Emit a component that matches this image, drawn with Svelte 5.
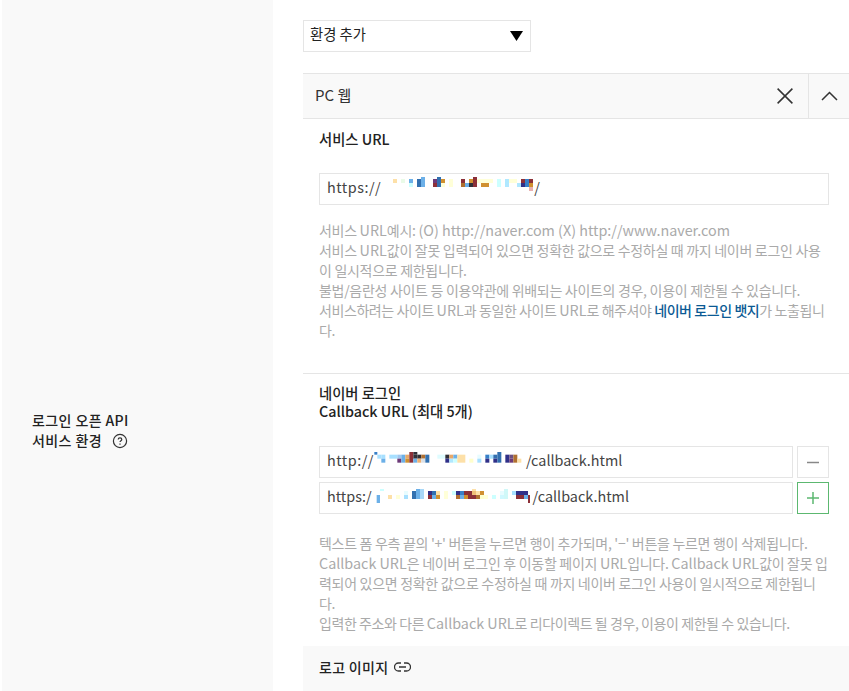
<script lang="ts">
  type Cell = [number, number, number, number, string];

  const R = '#8c3038', D = '#303038', N = '#303088', B = '#3270b0', M = '#3880c8', L = '#6cb0e8', S = '#a8e0ff';
  const C = '#ccffff', Y = '#ffffd8', T = '#fde0a8', O = '#d09030', W = '#b07030', P = '#6c3a78';

  const serviceMosaic: Cell[] = [
    [21, 15, 12, 12, T], [45, 15, 12, 12, '#eafbe8'], [69, 15, 12, 12, L], [69, 27, 12, 12, C],
    [93, 15, 12, 24, B], [105, 9, 12, 30, L], [141, 15, 12, 12, P], [141, 27, 12, 12, R],
    [153, 9, 12, 30, B], [165, 15, 12, 12, O], [165, 27, 12, 12, Y], [189, 15, 12, 24, Y],
    [225, 15, 12, 12, R], [225, 27, 12, 12, W], [237, 27, 12, 12, L], [249, 15, 12, 12, O],
    [249, 27, 12, 12, D], [261, 9, 12, 30, R], [273, 15, 48, 12, Y], [285, 27, 24, 12, O],
    [333, 15, 12, 24, C], [357, 15, 12, 24, '#b0e8ff'], [369, 15, 24, 12, Y], [393, 27, 12, 12, '#b0e8ff'],
    [405, 15, 12, 12, R], [405, 27, 12, 12, N], [417, 15, 12, 24, M], [429, 15, 12, 12, R],
    [429, 27, 12, 12, O], [429, 39, 12, 12, '#e8b0b0']
  ];

  const httpMosaic: Cell[] = [
    [9, 9, 9, 8, M], [18, 17, 12, 12, S], [30, 17, 12, 12, S], [30, 29, 12, 12, L], [54, 17, 24, 12, S],
    [78, 17, 12, 12, '#a0c8f0'], [78, 29, 12, 12, P], [90, 17, 12, 24, L], [102, 17, 12, 12, '#e8a868'],
    [102, 29, 12, 12, O], [114, 9, 12, 32, R], [126, 9, 12, 8, D], [126, 17, 12, 12, D], [126, 29, 12, 12, L],
    [138, 17, 12, 12, D], [138, 29, 12, 12, '#f0b070'], [150, 17, 12, 12, W], [150, 29, 12, 12, '#d8e0e8'],
    [162, 17, 12, 24, B], [198, 17, 24, 12, '#dffcff'], [222, 17, 12, 12, D], [222, 29, 12, 12, N],
    [234, 17, 12, 12, '#e8a868'], [234, 29, 12, 12, '#b0e8ff'], [246, 17, 12, 12, L], [246, 29, 12, 12, C],
    [258, 17, 24, 24, T], [294, 29, 12, 12, '#ffffcc'], [318, 17, 12, 12, '#e8fcff'], [318, 29, 12, 12, S],
    [342, 17, 12, 12, M], [342, 29, 12, 12, N], [354, 17, 12, 12, S], [366, 17, 12, 12, B], [366, 29, 12, 12, N],
    [378, 9, 12, 32, B], [402, 17, 12, 24, N], [414, 17, 12, 12, '#6c5080'], [414, 29, 12, 12, P],
    [426, 17, 12, 24, W], [438, 29, 12, 12, T]
  ];

  const httpsMosaic: Cell[] = [
    [20, 30, 10, 24, L], [30, 12, 12, 6, C], [54, 30, 12, 12, T], [78, 30, 12, 12, Y], [102, 18, 12, 12, '#e8fcff'],
    [102, 30, 12, 12, S], [126, 18, 12, 24, B], [138, 12, 12, 30, L], [150, 12, 12, 30, '#a8d8f8'],
    [174, 18, 12, 12, N], [174, 30, 12, 12, R], [186, 18, 12, 12, B], [186, 30, 12, 12, L], [198, 18, 12, 12, T],
    [198, 30, 12, 12, O], [222, 18, 12, 24, Y], [246, 18, 12, 12, C], [258, 18, 12, 12, N], [258, 30, 12, 12, W],
    [270, 18, 12, 12, M], [270, 30, 12, 12, L], [282, 18, 24, 12, R], [282, 30, 12, 12, O], [294, 30, 12, 12, R],
    [306, 12, 12, 6, T], [306, 18, 12, 12, '#f0c078'], [306, 30, 12, 12, R], [318, 18, 12, 12, T], [318, 30, 12, 12, W],
    [330, 18, 12, 12, O], [330, 30, 12, 12, '#ffffcc'], [342, 30, 12, 12, Y], [366, 30, 12, 12, C],
    [390, 18, 12, 12, '#e8fcff'], [390, 30, 12, 12, '#d0f8ff'], [402, 12, 12, 30, '#d0f8f8'], [426, 18, 12, 12, S],
    [438, 18, 24, 12, N], [438, 30, 24, 12, R], [462, 18, 12, 12, N], [462, 30, 12, 12, L], [474, 30, 6, 24, R]
  ];
</script>

<div class="page">
  <div class="row">
    <div class="label">
      <div>
        로그인 오픈 API<br />
        서비스 환경
        <svg class="help" width="16" height="16" viewBox="0 0 16 16" fill="none" stroke="#333">
          <circle cx="8" cy="8" r="6.6" stroke-width="1.2" />
          <path d="M6.2 6.5c0-1 .8-1.7 1.8-1.7s1.8.7 1.8 1.6c0 1.300-1.800 1.300-1.800 2.700" stroke-width="1.200" />
          <path d="M8 10.400v1.300" stroke-width="1.200" />
        </svg>
      </div>
    </div>

    <div class="content">
      <div class="select">
        <span>환경 추가</span>
        <svg width="13" height="10" viewBox="0 0 13 10"><path d="M0 0h13L6.500 10z" fill="#000" /></svg>
      </div>

      <div class="panel">
        <div class="panel-head">
          <span class="panel-title">PC 웹</span>
          <button class="head-btn close" aria-label="삭제">
            <svg width="16" height="16" viewBox="0 0 16 16" fill="none" stroke="#333" stroke-width="1.500"><path d="M.6.6l14.800 14.800M15.400.6L.6 15.400" /></svg>
          </button>
          <button class="head-btn toggle" aria-label="접기">
            <svg width="17" height="10" viewBox="0 0 17 10" fill="none" stroke="#333" stroke-width="1.500"><path d="M1 9l7.500-7.500L16 9" /></svg>
          </button>
        </div>

        <section class="block first">
          <h4>서비스 URL</h4>
          <div class="field">
            <span class="prefix">https://</span>
            <svg class="mosaic" width="153" height="24" viewBox="-15 9 459 72">
              {#each serviceMosaic as [x, y, w, h, fill]}<rect {x} {y} width={w} height={h} {fill} />{/each}
            </svg>
            <span>/</span>
          </div>
          <p class="hint">
            서비스 <span class="en">URL</span>예시: <span class="en">(O) http://naver.com (X) http://www.naver.com</span><br />
            서비스 <span class="en">URL</span>값이 잘못 입력되어 있으면 정확한 값으로 수정하실 때 까지 네이버 로그인 사용<br />
            이 일시적으로 제한됩니다.<br />
            불법/음란성 사이트 등 이용약관에 위배되는 사이트의 경우, 이용이 제한될 수 있습니다.<br />
            <span class="tight">서비스하려는 사이트 <span class="en">URL</span>과 동일한 사이트 <span class="en">URL</span>로 해주셔야 <b>네이버 로그인 뱃지</b>가 노출됩니</span><br />
            다.
          </p>
        </section>

        <section class="block second">
          <h4>네이버 로그인<br />Callback URL (최대 5개)</h4>
          <div class="url-row">
            <div class="field">
              <span class="prefix">http://</span>
              <svg class="mosaic" width="152" height="24" viewBox="8 3 456 72">
                {#each httpMosaic as [x, y, w, h, fill]}<rect {x} {y} width={w} height={h} {fill} />{/each}
              </svg>
              <span>/callback.html</span>
            </div>
            <button class="square" aria-label="행 삭제">
              <svg width="14" height="14" viewBox="0 0 14 14" stroke="#888" stroke-width="1.500"><path d="M1 7.500h12" /></svg>
            </button>
          </div>
          <div class="url-row">
            <div class="field">
              <span>https:/</span>
              <svg class="mosaic" width="161" height="24" viewBox="6 3 483 72">
                {#each httpsMosaic as [x, y, w, h, fill]}<rect {x} {y} width={w} height={h} {fill} />{/each}
              </svg>
              <span>/callback.html</span>
            </div>
            <button class="square add" aria-label="행 추가">
              <svg width="14" height="14" viewBox="0 0 14 14" stroke="#5cb870" stroke-width="1.500"><path d="M1 7h12M7 1v12" /></svg>
            </button>
          </div>
          <p class="hint">
            텍스트 폼 우측 끝의 '+' 버튼을 누르면 행이 추가되며, '−' 버튼을 누르면 행이 삭제됩니다.<br />
            <span class="en">Callback URL</span>은 네이버 로그인 후 이동할 페이지 <span class="en">URL</span>입니다. <span class="en">Callback URL</span>값이 잘못 입<br />
            력되어 있으면 정확한 값으로 수정하실 때 까지 네이버 로그인 사용이 일시적으로 제한됩니<br />
            다.<br />
            <span class="tight">입력한 주소와 다른 <span class="en">Callback URL</span>로 리다이렉트 될 경우, 이용이 제한될 수 있습니다.</span>
          </p>
        </section>

        <div class="logo-row">
          <span>로고 이미지</span>
          <svg width="17" height="10" viewBox="0 0 17 10" fill="none" stroke="#333" stroke-width="1.300">
            <path d="M7 1H4.500a4 4 0 0 0 0 8H7M10 1h2.500a4 4 0 0 1 0 8H10M5 5h7" />
          </svg>
        </div>
      </div>
    </div>
  </div>
</div>

<style>
  :global(body) {
    margin: 0;
    background: #fff;
  }

  .page {
    height: 691px;
    overflow: hidden;
    padding-left: 2px;
    font-family: "Noto Sans CJK KR", "Noto Sans", sans-serif;
    font-size: 14px;
    color: #333;
  }

  .row {
    display: flex;
    height: 860px;
  }

  .label {
    flex: 0 0 241px;
    padding-left: 30px;
    display: flex;
    align-items: center;
    background: #f9f9f9;
    font-weight: 500;
    line-height: 20px;
    letter-spacing: 0.4px;
    color: #222;
  }

  .help {
    vertical-align: -3px;
    margin-left: 6px;
  }

  .content {
    flex: 1;
    min-width: 0;
    padding: 20px 0 0 30px;
  }

  .select {
    width: 226px;
    height: 30px;
    border: 1px solid #e5e5e5;
    display: flex;
    align-items: center;
    justify-content: space-between;
    color: #222;
  }

  .select span {
    padding: 0 0 5px 6px;
    line-height: 20px;
    font-size: 14.3px;
  }

  .select svg {
    margin-right: 7px;
  }

  .panel {
    margin-top: 21px;
    width: 560px;
  }

  .panel-head {
    display: flex;
    align-items: stretch;
    height: 44px;
    background: #f9f9f9;
    border-top: 1px solid #e5e5e5;
    border-bottom: 1px solid #e5e5e5;
  }

  .panel-title {
    flex: 1;
    padding-left: 12px;
    line-height: 42px;
    font-size: 15px;
  }

  .head-btn {
    border: 0;
    padding: 0;
    background: none;
    display: flex;
    align-items: center;
    justify-content: center;
  }

  .head-btn.close {
    width: 46px;
  }

  .head-btn.toggle {
    width: 55px;
    padding-right: 14px;
    box-sizing: border-box;
    border-left: 1px solid #e5e5e5;
  }

  .block {
    width: 560px;
    box-sizing: border-box;
    padding: 10px 34px 0 16px;
  }

  .block.first {
    height: 255px;
    border-bottom: 1px solid #e5e5e5;
  }

  .block.second {
    height: 272px;
  }

  h4 {
    margin: 0;
    font-size: 14.3px;
    font-weight: 500;
    line-height: 18px;
    color: #222;
  }

  .first h4 {
    line-height: 20px;
    margin-bottom: 24px;
  }

  .second h4 {
    margin-bottom: 26px;
  }

  .field {
    flex: 1;
    min-width: 0;
    height: 32px;
    box-sizing: border-box;
    display: flex;
    align-items: center;
    padding-left: 7px;
    border: 1px solid #e5e5e5;
    font-size: 14.4px;
    color: #444;
  }

  .field span {
    line-height: 20px;
    margin-bottom: 4px;
  }

  .field .prefix {
    letter-spacing: 0.5px;
  }

  .mosaic {
    flex: none;
    overflow: visible;
  }

  .url-row {
    display: flex;
    gap: 4px;
    margin-bottom: 4px;
  }

  .square {
    flex: none;
    width: 32px;
    height: 32px;
    padding: 0;
    background: #fff;
    border: 1px solid #e5e5e5;
    display: flex;
    align-items: center;
    justify-content: center;
  }

  .square.add {
    border-color: #5cb870;
  }

  .hint {
    margin: 15px 0 0;
    line-height: 20px;
    color: #aaa;
    letter-spacing: -0.3px;
    white-space: nowrap;
  }

  .second .hint {
    margin-top: 19px;
  }

  .hint .tight {
    letter-spacing: -0.42px;
  }

  .hint .en {
    font-size: 14.35px;
    letter-spacing: 0;
  }

  .hint b {
    font-weight: 500;
    color: #0b5a94;
  }

  .logo-row {
    height: 45px;
    box-sizing: border-box;
    padding: 0 0 3px 16px;
    display: flex;
    align-items: center;
    gap: 6px;
    background: #f9f9f9;
    font-weight: 500;
    letter-spacing: 0.3px;
    color: #222;
  }
</style>
